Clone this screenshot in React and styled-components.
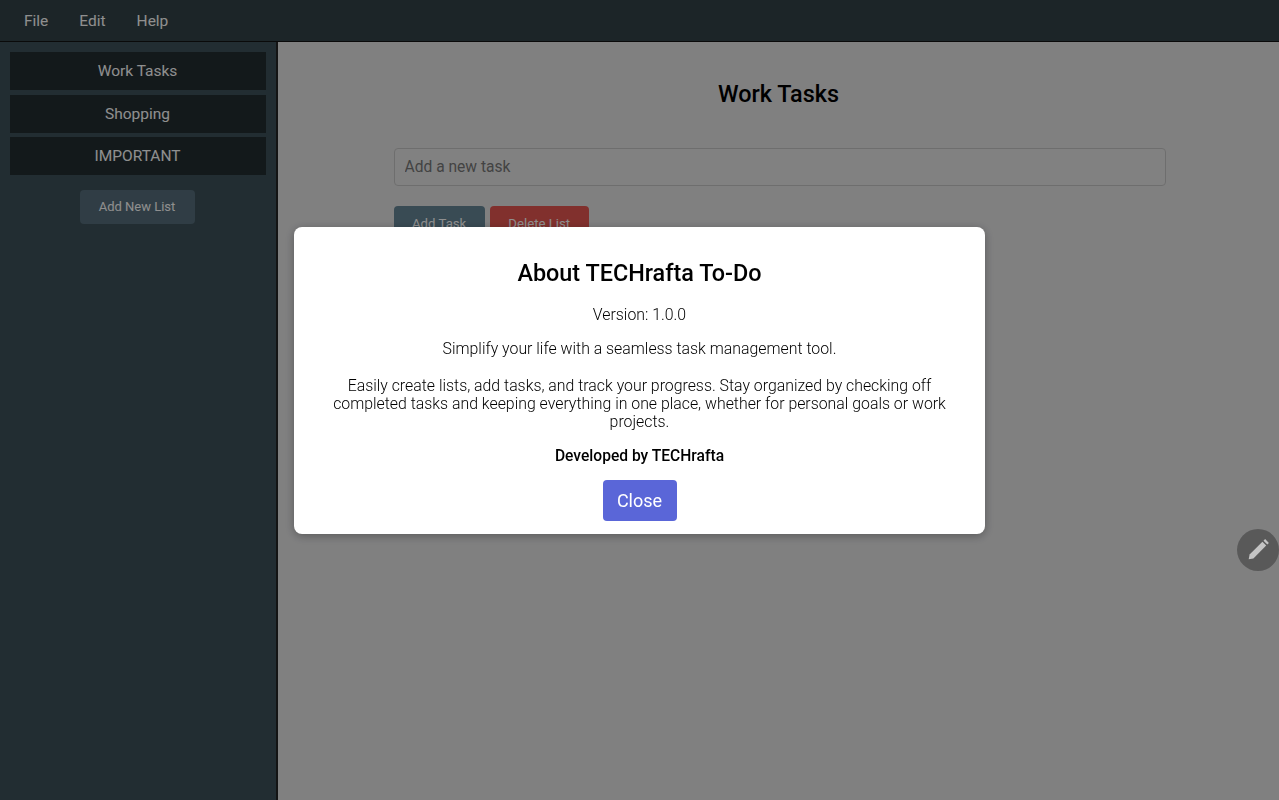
import { createGlobalStyle } from 'styled-components'
import styled from 'styled-components'

const GlobalStyle = createGlobalStyle`
  html, body {
    margin: 0;
    height: 100%;
    overflow: hidden;
    font-family: Roboto, "Liberation Sans", sans-serif;
  }
  * {
    box-sizing: border-box;
  }
`;

const Page = styled.div`
  width: 100vw;
  height: 100vh;
  display: flex;
  flex-direction: column;
  background-color: #d5d5d6;
`;
const MenuBar = styled.div`
  height: 42px;
  flex-shrink: 0;
  display: flex;
  align-items: center;
  gap: 31px;
  padding-left: 24px;
  background-color: #2f3f44;
  border-bottom: 1px solid #111;
`;
const MenuItem = styled.span`
  font-size: 15.5px;
  color: #eee;
`;
const Body = styled.div`
  flex: 1;
  display: flex;
  min-height: 0;
`;
const Sidebar = styled.aside`
  width: 278px;
  flex-shrink: 0;
  display: flex;
  flex-direction: column;
  gap: 4.5px;
  padding: 10px 10px 0 10px;
  background-color: #3a4c54;
  border-right: 2px solid #222;
`;
const ListItem = styled.div`
  height: 38px;
  display: flex;
  align-items: center;
  justify-content: center;
  padding-right: 1px;
  font-size: 15.5px;
  color: #eee;
  background-color: #202a2e;
`;
const AddListButton = styled.button`
  align-self: center;
  width: 115px;
  height: 34px;
  margin: 10px 2px 0 0;
  border: none;
  border-radius: 4px;
  font-family: inherit;
  font-size: 13px;
  color: #eee;
  background-color: #506773;
`;
const Main = styled.main`
  flex: 1;
  display: flex;
  flex-direction: column;
  align-items: center;
  padding-top: 38px;
`;
const Title = styled.h1`
  margin: 0;
  font-size: 23.4px;
  font-weight: 500;
  color: #000;
`;
const TaskForm = styled.div`
  width: 772px;
  margin: 40px 0 0 2px;
`;
const TaskInput = styled.input`
  width: 100%;
  height: 38px;
  padding: 0 10px;
  border: 1px solid #b8b8b8;
  border-radius: 4px;
  font-family: inherit;
  font-size: 15.6px;
  background-color: #d8d8d8;

  &::placeholder {
    color: #707070;
  }
`;
const ButtonRow = styled.div`
  display: flex;
  gap: 5px;
  margin-top: 20px;
`;
const ActionButton = styled.button`
  height: 34px;
  padding: 0 18.5px;
  border: none;
  border-radius: 4px;
  font-family: inherit;
  font-size: 13.2px;
  color: #eee;
  background-color: ${props => props.$danger ? '#d7504b' : '#5f7d8c'};
`;
const Fab = styled.button`
  position: fixed;
  z-index: 2;
  right: 0;
  top: 529px;
  width: 42px;
  height: 42px;
  display: flex;
  align-items: center;
  justify-content: center;
  padding: 0;
  border: none;
  border-radius: 50%;
  color: #c4c4c4;
  background-color: #595959;
`;
const Overlay = styled.div`
  position: fixed;
  z-index: 1;
  inset: 0;
  display: flex;
  align-items: center;
  justify-content: center;
  padding-bottom: 39px;
  background-color: rgba(0, 0, 0, 0.4);
`;
const Modal = styled.div`
  width: 691px;
  height: 307px;
  padding: 32px 36px 0;
  display: flex;
  flex-direction: column;
  align-items: center;
  text-align: center;
  background-color: #fff;
  border-radius: 8px;
  box-shadow: 0 2px 10px rgba(0, 0, 0, 0.3);
`;
const ModalTitle = styled.h2`
  margin: 0 0 19px;
  font-size: 23.4px;
  font-weight: 500;
  color: #000;
`;
const Text = styled.p`
  margin: 0 0 ${props => props.$gap || 16}px;
  font-size: ${props => props.$bold ? 15.6 : 15.85}px;
  line-height: 18px;
  font-weight: ${props => props.$bold ? 500 : 300};
  color: #000;
`;
const CloseButton = styled.button`
  width: 74px;
  height: 41px;
  border: none;
  border-radius: 4px;
  font-family: inherit;
  font-size: 18px;
  color: #fff;
  background-color: #5a66d8;
`;

const PencilIcon = () => (
  <svg width="24" height="24" viewBox="0 0 24 24" fill="currentColor">
    <path d="M2.7 21.3 3.6 16.6 16.4 3.8 20.2 7.6 7.4 20.4Z" />
    <path d="M17.5 2.7 19.1 1.1 22.9 4.9 21.3 6.5Z" />
  </svg>
);

const App = () => {
  return (
    <Page>
      <GlobalStyle />
      <MenuBar>
        <MenuItem>File</MenuItem>
        <MenuItem>Edit</MenuItem>
        <MenuItem>Help</MenuItem>
      </MenuBar>
      <Body>
        <Sidebar>
          <ListItem>Work Tasks</ListItem>
          <ListItem>Shopping</ListItem>
          <ListItem>IMPORTANT</ListItem>
          <AddListButton>Add New List</AddListButton>
        </Sidebar>
        <Main>
          <Title>Work Tasks</Title>
          <TaskForm>
            <TaskInput placeholder='Add a new task' />
            <ButtonRow>
              <ActionButton>Add Task</ActionButton>
              <ActionButton $danger>Delete List</ActionButton>
            </ButtonRow>
          </TaskForm>
        </Main>
      </Body>
      <Fab><PencilIcon /></Fab>
      <Overlay>
        <Modal>
          <ModalTitle>About TECHrafta To-Do</ModalTitle>
          <Text>Version: 1.0.0</Text>
          <Text $gap={19}>Simplify your life with a seamless task management tool.</Text>
          <Text>Easily create lists, add tasks, and track your progress. Stay organized by checking off completed tasks and keeping everything in one place, whether for personal goals or work projects.</Text>
          <Text $bold $gap={15}>Developed by TECHrafta</Text>
          <CloseButton>Close</CloseButton>
        </Modal>
      </Overlay>
    </Page>
  )
}

export default App
